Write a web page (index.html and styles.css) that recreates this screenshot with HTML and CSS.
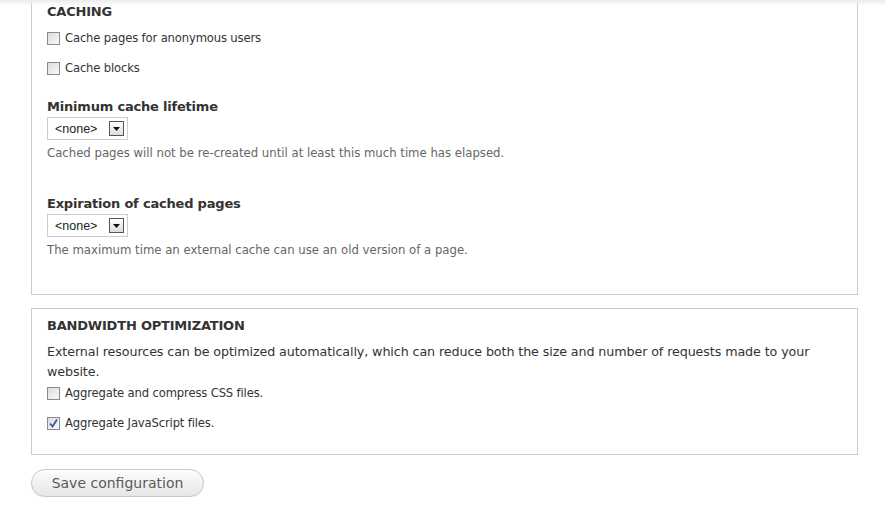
FILE: index.html
```html
<!DOCTYPE html>
<html>
<head>
<meta charset="utf-8">
<link rel="stylesheet" href="styles.css">
</head>
<body>
<div class="topshade"></div>
<form class="page">
  <fieldset class="box first">
    <h2 class="legend">CACHING</h2>
    <div class="check"><span class="cb"></span><span class="lbl">Cache pages for anonymous users</span></div>
    <div class="check"><span class="cb"></span><span class="lbl">Cache blocks</span></div>
    <div class="item">
      <div class="label">Minimum cache lifetime</div>
      <div class="select"><span class="opt">&lt;none&gt;</span><span class="arrow"><svg width="7" height="4" viewBox="0 0 7 4"><path d="M0 0H7L3.5 4Z" fill="#111"/></svg></span></div>
      <div class="desc">Cached pages will not be re-created until at least this much time has elapsed.</div>
    </div>
    <div class="item">
      <div class="label">Expiration of cached pages</div>
      <div class="select"><span class="opt">&lt;none&gt;</span><span class="arrow"><svg width="7" height="4" viewBox="0 0 7 4"><path d="M0 0H7L3.5 4Z" fill="#111"/></svg></span></div>
      <div class="desc">The maximum time an external cache can use an old version of a page.</div>
    </div>
  </fieldset>
  <fieldset class="box second">
    <h2 class="legend">BANDWIDTH OPTIMIZATION</h2>
    <p class="intro">External resources can be optimized automatically, which can reduce both the size and number of requests made to your website.</p>
    <div class="check"><span class="cb"></span><span class="lbl">Aggregate and compress CSS files.</span></div>
    <div class="check"><span class="cb checked"><svg width="9" height="9" viewBox="0 0 9 9"><path d="M1 4.5L3.5 7.5L8 0.5" fill="none" stroke="#3a55a8" stroke-width="1.8"/></svg></span><span class="lbl">Aggregate JavaScript files.</span></div>
  </fieldset>
  <button type="button" class="save">Save configuration</button>
</form>
</body>
</html>
```

FILE: styles.css
```css
html, body {
  margin: 0;
  padding: 0;
  background: #fff;
}
body {
  font-family: "DejaVu Sans", Verdana, sans-serif;
  color: #333;
  position: relative;
}
.topshade {
  position: absolute;
  left: 0;
  right: 0;
  top: 0;
  height: 6px;
  background: linear-gradient(#ececec, rgba(255,255,255,0));
}
.page {
  padding: 0 0 0 31px;
  width: 827px;
}
.box {
  margin: 0;
  border: 1px solid #ccc;
  padding: 0 15px;
  box-sizing: border-box;
  width: 827px;
}
.first {
  border-top: none;
  height: 295px;
  padding-top: 4px;
}
.second {
  margin-top: 13px;
  height: 147px;
  padding-top: 9px;
}
.legend {
  margin: 0;
  font-size: 13px;
  font-weight: bold;
  line-height: 16px;
  letter-spacing: -0.2px;
}
.first .legend {
  margin-bottom: 10px;
}
.second .legend {
  margin-bottom: 8px;
}
.check {
  display: flex;
  align-items: center;
  height: 16px;
  margin-bottom: 14px;
}
.cb {
  width: 11px;
  height: 11px;
  border: 1px solid #8a8a8a;
  background: linear-gradient(135deg, #dcdcdc, #fafafa);
  margin-right: 5px;
  display: flex;
  align-items: center;
  justify-content: center;
  flex: none;
}
.lbl {
  font-size: 11.6px;
  letter-spacing: -0.15px;
}
.item {
  margin-top: 23px;
  margin-bottom: 35px;
}
.label {
  font-size: 13px;
  font-weight: bold;
  line-height: 16px;
  letter-spacing: -0.2px;
  margin-bottom: 2px;
}
.select {
  width: 81px;
  height: 23px;
  box-sizing: border-box;
  border: 1px solid #ccc;
  display: flex;
  align-items: center;
  justify-content: space-between;
  padding: 0 3px 0 7px;
  font-family: "Liberation Sans", Arial, sans-serif;
  font-size: 12.5px;
  color: #222;
}
.arrow {
  width: 13px;
  height: 13px;
  border: 1px solid #555;
  background: linear-gradient(#fff, #ddd);
  display: flex;
  align-items: center;
  justify-content: center;
}
.desc {
  font-size: 11.7px;
  color: #666;
  line-height: 16px;
  margin-top: 5px;
  letter-spacing: 0;
}
.intro {
  margin: 0 0 3px;
  font-size: 12.7px;
  line-height: 20px;
  letter-spacing: -0.1px;
}
.save {
  margin-top: 14px;
  width: 173px;
  height: 28px;
  border: 1px solid #c8c8c8;
  border-radius: 14px;
  background: linear-gradient(#fdfdfd, #e6e6e6);
  color: #5a5a5a;
  font-family: "DejaVu Sans", Verdana, sans-serif;
  font-size: 14px;
  padding: 0;
  box-shadow: 0 1px 1px rgba(0,0,0,0.08);
}
```
